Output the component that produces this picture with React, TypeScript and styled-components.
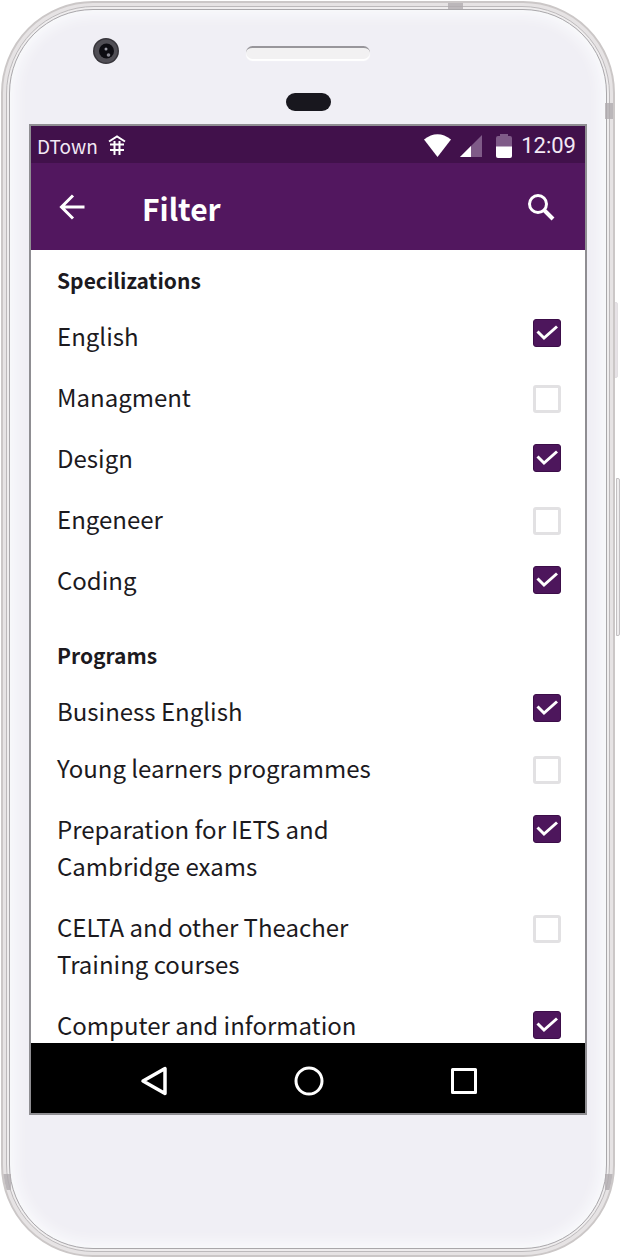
import React, { useState } from "react";
import styled, { createGlobalStyle } from "styled-components";

const GlobalStyle = createGlobalStyle`
  *, *::before, *::after { box-sizing: border-box; }
  body {
    margin: 0;
    background: #ffffff;
    color: #1c1a1e;
    font-family: "Noto Sans CJK SC", "Noto Sans", sans-serif;
  }
  button { padding: 0; border: 0; background: none; color: inherit; cursor: pointer; }
  svg { display: block; }
`;

const Page = styled.div`
  position: relative;
  padding: 1px 5px 1px 1px;
`;

const Frame = styled.div`
  position: relative;
  overflow: hidden;
  padding: 3px;
  border: 2px solid #cbc7c7;
  border-radius: 92px;
  background: #e6e3e4;
`;

const Rim = styled.div`
  position: relative;
  padding: 2px;
  border: 1px solid #bcb9bb;
  border-radius: 88px;
  background: #efedee;
`;

const Face = styled.div`
  position: relative;
  padding: 0 19px;
  border: 1px solid #a9a7aa;
  border-radius: 84px;
  background: #f0eff5;
  box-shadow: inset 0 0 16px 3px #fcfdfe;
`;

const Hardware = styled.div`
  display: grid;
  grid-template-columns: 1fr 124px 1fr;
  height: 114px;
  padding-top: 28px;
`;

const Camera = styled.svg`
  justify-self: start;
  margin-left: 64px;
`;

const Earpiece = styled.div`
  display: flex;
  flex-direction: column;
  align-items: center;
  gap: 34px;
  padding-top: 8px;
`;

const Speaker = styled.div`
  width: 100%;
  height: 13px;
  border-top: 2px solid #98969b;
  border-radius: 7px;
  background: #f2f1f2;
  box-shadow: 0 2px 1px #ffffff;
`;

const Sensor = styled.div`
  width: 45px;
  height: 18px;
  border-radius: 9px;
  background: #18171e;
`;

const Mark = styled.span<{ $side: "top" | "left" | "right"; $at: number }>`
  position: absolute;
  z-index: 1;
  background: #b0abaf;
  opacity: 0.8;
  ${({ $side, $at }) =>
    $side === "top"
      ? `top: -1px; left: ${$at}%; width: 15px; height: 7px;`
      : `${$side}: -2px; top: ${$at}%; width: 10px; height: 16px;`}
`;

const SideKey = styled.span<{ $top: number; $height: number; $soft?: boolean }>`
  position: absolute;
  right: ${({ $soft }) => ($soft ? 2 : 0)}px;
  top: ${({ $top }) => $top}%;
  width: 4px;
  height: ${({ $height }) => $height}px;
  border-radius: 0 2px 2px 0;
  background: ${({ $soft }) => ($soft ? "#e6e2e6" : "#efedee")};
  border: 1px solid ${({ $soft }) => ($soft ? "#e2dfe2" : "#c3c0c2")};
`;

const Screen = styled.div`
  border: 2px solid #8f8e92;
  background: #ffffff;
`;

const StatusBar = styled.div`
  display: flex;
  align-items: center;
  height: 37px;
  padding: 2px 9px 0 6px;
  background: #41114b;
  color: #f3e9f5;
`;

const Carrier = styled.span`
  margin-right: 10px;
  font-size: 19px;
  line-height: 24px;
`;

const StatusIcons = styled.div`
  display: flex;
  align-items: center;
  gap: 9px;
  margin-left: auto;
`;

const Clock = styled.time`
  font-family: Roboto, sans-serif;
  font-size: 22px;
  line-height: 24px;
`;

const AppBar = styled.header`
  display: flex;
  align-items: center;
  height: 87px;
  padding: 0 28px 0 25px;
  background: #52175f;
  color: #ffffff;
`;

const Title = styled.h1`
  flex: 1;
  margin: 2px 0 0 54px;
  font-size: 30px;
  font-weight: 700;
  line-height: 40px;
`;

const Content = styled.main`
  padding: 12px 24px 0 26px;
  overflow: hidden;
`;

const Section = styled.section`
  & + & { margin-top: 39px; }
`;

const Heading = styled.h2`
  margin: 0 0 18px;
  font-size: 21px;
  font-weight: 700;
  line-height: 37px;
`;

const Options = styled.ul`
  margin: 0;
  padding: 0;
  list-style: none;
`;

const Tick = styled.input`
  appearance: none;
  flex: none;
  width: 28px;
  height: 28px;
  margin: 7px 0 0;
  border: 3px solid #e2e1e3;
  border-radius: 3px;
  background: #ffffff;
  cursor: pointer;

  &:checked {
    margin-top: 5px;
    border: 1px solid #3c0d49;
    background: #4d165c;
  }
`;

const Option = styled.li<{ $compact?: boolean }>`
  margin-bottom: ${({ $compact }) => ($compact ? 20 : 24)}px;
  &:last-child { margin-bottom: 0; }
  &:first-child ${Tick} { margin-top: 2px; }
`;

const OptionLabel = styled.label`
  display: flex;
  align-items: flex-start;
  justify-content: space-between;
  font-size: 24px;
  line-height: 37px;
`;

const OptionText = styled.span`
  max-width: 370px;
`;

const TickBox = styled.span`
  position: relative;
  display: flex;
`;

const TickMark = styled.svg`
  position: absolute;
  left: 0;
  bottom: 0;
  pointer-events: none;
`;

const NavBar = styled.nav`
  display: flex;
  align-items: center;
  justify-content: center;
  gap: 125px;
  height: 70px;
  padding: 6px 0 0 1px;
  background: #000000;
  color: #ffffff;
`;

const Chin = styled.div`
  height: 133px;
`;

type Entry = { name: string; on: boolean; compact?: boolean };

const groups: { title: string; entries: Entry[] }[] = [
  {
    title: "Specilizations",
    entries: [
      { name: "English", on: true },
      { name: "Managment", on: false },
      { name: "Design", on: true },
      { name: "Engeneer", on: false },
      { name: "Coding", on: true },
    ],
  },
  {
    title: "Programs",
    entries: [
      { name: "Business English", on: true, compact: true },
      { name: "Young learners programmes", on: false },
      { name: "Preparation for IETS and Cambridge exams", on: true },
      { name: "CELTA and other Theacher Training courses", on: false },
      { name: "Computer and information", on: true },
    ],
  },
];

function FilterOption({ entry }: { entry: Entry }) {
  const [on, setOn] = useState(entry.on);
  return (
    <Option $compact={entry.compact}>
      <OptionLabel>
        <OptionText>{entry.name}</OptionText>
        <TickBox>
          <Tick type="checkbox" checked={on} onChange={() => setOn(!on)} />
          {on && (
            <TickMark width="28" height="28" viewBox="0 0 28 28" fill="none" aria-hidden="true">
              <path d="M4.500 12.500l6.500 6.500L24 7.500" stroke="#fff" strokeWidth="3" />
            </TickMark>
          )}
        </TickBox>
      </OptionLabel>
    </Option>
  );
}

export default function App() {
  return (
    <>
      <GlobalStyle />
      <Page>
        <SideKey $top={24} $height={76} $soft />
        <SideKey $top={38} $height={158} />
        <Frame>
          <Mark $side="top" $at={73} />
          <Mark $side="right" $at={8} />
          <Mark $side="left" $at={93.5} />
          <Mark $side="right" $at={93.5} />
          <Rim>
            <Face>
              <Hardware>
                <Camera width="26" height="26" viewBox="0 0 26 26" aria-hidden="true">
                  <circle cx="13" cy="13" r="13" fill="#37353b" />
                  <circle cx="13" cy="13" r="11.500" fill="#504e55" />
                  <circle cx="13.500" cy="13" r="7.500" fill="#0d0c12" />
                  <circle cx="13" cy="11" r="1.500" fill="#9a99a3" />
                  <circle cx="15.500" cy="17" r="1.800" fill="#8a8993" />
                </Camera>
                <Earpiece>
                  <Speaker />
                  <Sensor />
                </Earpiece>
              </Hardware>
              <Screen>
                <StatusBar>
                  <Carrier>DTown</Carrier>
                  <svg width="18" height="22" viewBox="0 0 18 22" fill="none" stroke="#fff" strokeWidth="2" aria-hidden="true">
                    <path d="M1 6.500L9 1.500L17 6.500M2 9.500H16M2 15H16M6.500 6V20M11.500 6V20" />
                  </svg>
                  <StatusIcons>
                    <svg width="27" height="23" viewBox="0 0 27 23" aria-hidden="true">
                      <path d="M0 5.500Q13.500-5 27 5.500L13.500 23Z" fill="#fff" />
                    </svg>
                    <svg width="22" height="22" viewBox="0 0 22 22" aria-hidden="true">
                      <path d="M22 0V22H0Z" fill="#7f5b88" />
                      <path d="M11 11V22H0Z" fill="#fff" />
                    </svg>
                    <svg width="21" height="24" viewBox="0 0 21 24" aria-hidden="true">
                      <path d="M9 2V0H17V2H19Q21 2 21 4V13H5V4Q5 2 7 2Z" fill="#7f5b88" />
                      <path d="M5 12.500H21V22Q21 24 19 24H7Q5 24 5 22Z" fill="#fff" />
                    </svg>
                    <Clock>12:09</Clock>
                  </StatusIcons>
                </StatusBar>
                <AppBar>
                  <button type="button" aria-label="Back">
                    <svg width="32" height="32" viewBox="0 0 32 32" fill="none" stroke="currentColor" strokeWidth="3" aria-hidden="true">
                      <path d="M28.500 16H6M17 4.500L5.500 16L17 27.500" />
                    </svg>
                  </button>
                  <Title>Filter</Title>
                  <button type="button" aria-label="Search">
                    <svg width="32" height="32" viewBox="0 0 32 32" fill="none" stroke="currentColor" aria-hidden="true">
                      <circle cx="13" cy="13" r="8.500" strokeWidth="3" />
                      <path d="M19 19L28 28" strokeWidth="4" />
                    </svg>
                  </button>
                </AppBar>
                <Content>
                  {groups.map((group) => (
                    <Section key={group.title}>
                      <Heading>{group.title}</Heading>
                      <Options>
                        {group.entries.map((entry) => (
                          <FilterOption key={entry.name} entry={entry} />
                        ))}
                      </Options>
                    </Section>
                  ))}
                </Content>
                <NavBar aria-label="System">
                  <button type="button" aria-label="Back">
                    <svg width="30" height="30" viewBox="0 0 30 30" fill="none" stroke="currentColor" strokeWidth="3.500" strokeLinejoin="round" aria-hidden="true">
                      <path d="M26 2.500V27.500L4 15Z" />
                    </svg>
                  </button>
                  <button type="button" aria-label="Home">
                    <svg width="30" height="30" viewBox="0 0 30 30" fill="none" stroke="currentColor" strokeWidth="3" aria-hidden="true">
                      <circle cx="15" cy="15" r="13" />
                    </svg>
                  </button>
                  <button type="button" aria-label="Recent apps">
                    <svg width="30" height="30" viewBox="0 0 30 30" fill="none" stroke="currentColor" strokeWidth="3" strokeLinejoin="round" aria-hidden="true">
                      <rect x="3.500" y="3.500" width="23" height="23" />
                    </svg>
                  </button>
                </NavBar>
              </Screen>
              <Chin />
            </Face>
          </Rim>
        </Frame>
      </Page>
    </>
  );
}
